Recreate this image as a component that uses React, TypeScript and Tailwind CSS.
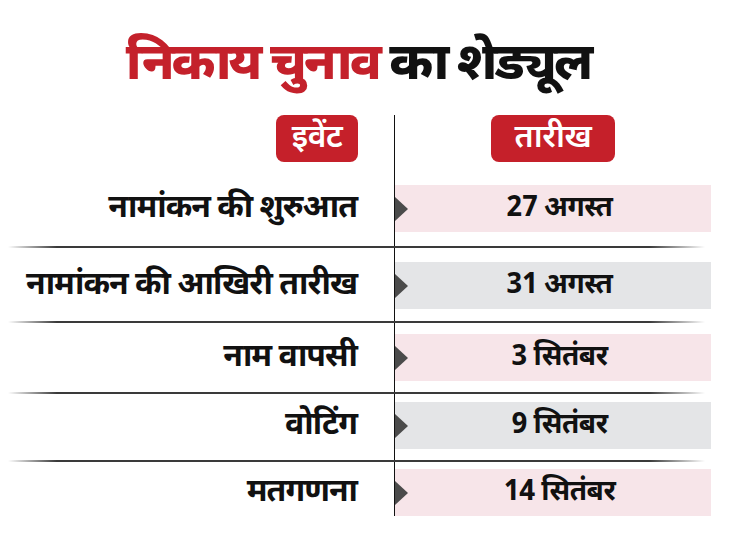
const rows = [
  { label: 'नामांकन की शुरुआत', date: '27 अगस्त', bg: 'bg-[#f7e5e9]', pad: 'pt-[23px] pb-[14px]', sep: true },
  { label: 'नामांकन की आखिरी तारीख', date: '31 अगस्त', bg: 'bg-[#e4e5e7]', pad: 'pt-[14px] pb-[12px]', sep: true },
  { label: 'नाम वापसी', date: '3 सितंबर', bg: 'bg-[#f7e5e9]', pad: 'pt-[11px] pb-[11px]', sep: true },
  { label: 'वोटिंग', date: '9 सितंबर', bg: 'bg-[#e4e5e7]', pad: 'pt-[8px] pb-[11px]', sep: true },
  { label: 'मतगणना', date: '14 सितंबर', bg: 'bg-[#f7e5e9]', pad: 'pt-[7px] pb-0', sep: false },
];

function Pointer() {
  return (
    <svg className="w-[13px] h-[24px] shrink-0" viewBox="0 0 13 24">
      <path d="M0 0 L13 12 L0 24 Z" fill="#4b4b4b" />
    </svg>
  );
}

export default function App() {
  return (
    <div className="w-[730px] h-[540px] bg-white text-[#111] font-['Noto_Sans_Devanagari','Noto_Sans','Lohit_Devanagari',sans-serif]">
      {/* Title */}
      <h1 className="pt-[35px] h-[115px] text-center text-[52px] font-extrabold leading-[62px] tracking-[-3px] pr-[14px]">
        <span className="text-[#c4212b]">निकाय चुनाव</span> <span>का शेड्यूल</span>
      </h1>

      {/* Header badges */}
      <div className="flex">
        <div className="w-[394px] flex justify-end pr-[36px]">
          <div className="w-[82px] h-[47px] rounded-[8px] bg-[#c5202a] text-white text-[32px] font-semibold tracking-[-0.5px] flex items-center justify-center">
            इवेंट
          </div>
        </div>
        <div className="w-[317px] border-l border-[#111] flex justify-center">
          <div className="w-[124px] h-[47px] rounded-[8px] bg-[#c5202a] text-white text-[32px] font-semibold tracking-[-0.5px] flex items-center justify-center">
            तारीख
          </div>
        </div>
      </div>

      {/* Rows */}
      {rows.map((r) => (
        <div key={r.date}>
          <div className="flex">
            <div className="w-[394px] flex items-end justify-end pr-[37px]">
              <div className={`${r.pad} w-full text-right`}>
                <div className="h-[47px] flex items-center justify-end text-[32px] font-bold tracking-[-1px] whitespace-nowrap">
                  {r.label}
                </div>
              </div>
            </div>
            <div className={`w-[317px] border-l border-[#111] ${r.pad}`}>
              <div className={`h-[47px] flex items-center ${r.bg}`}>
                <Pointer />
                <div className="flex-1 text-center text-[28px] font-bold tracking-[-0.5px] whitespace-nowrap">
                  {r.date}
                </div>
              </div>
            </div>
          </div>
          {r.sep && (
            <div className="ml-[8px] w-[697px] h-[2px] bg-[linear-gradient(to_right,transparent,#3a3a3a_7%,#3a3a3a_92%,transparent)]" />
          )}
        </div>
      ))}
    </div>
  );
}
